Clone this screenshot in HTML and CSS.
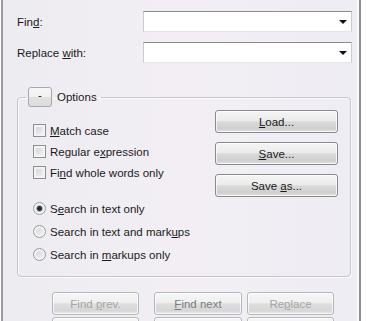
FILE: index.html
```html
<!DOCTYPE html>
<html lang="en">
<head>
  <meta charset="UTF-8" />
  <meta name="viewport" content="width=device-width, initial-scale=1.0" />
  <title>Find and Replace</title>
  <link rel="stylesheet" href="styles.css">
</head>
<body>
  <div class="dialog">
    <!-- search fields -->
    <div class="field">
      <label>Fin<u>d</u>:</label>
      <div class="combo"><input type="text"><span class="arrow"></span></div>
    </div>
    <div class="field">
      <label>Replace <u>w</u>ith:</label>
      <div class="combo"><input type="text"><span class="arrow"></span></div>
    </div>

    <!-- options group -->
    <fieldset class="options">
      <legend><button class="toggle">-</button><span>Options</span></legend>
      <div class="opts-top">
        <div class="checks">
          <label class="opt"><input type="checkbox"><span><u>M</u>atch case</span></label>
          <label class="opt"><input type="checkbox"><span>Regular e<u>x</u>pression</span></label>
          <label class="opt"><input type="checkbox"><span>Fi<u>n</u>d whole words only</span></label>
        </div>
        <div class="side-buttons">
          <button class="btn"><u>L</u>oad...</button>
          <button class="btn"><u>S</u>ave...</button>
          <button class="btn">Save <u>a</u>s...</button>
        </div>
      </div>
      <div class="radios">
        <label class="opt"><input type="radio" name="scope" checked><span>S<u>e</u>arch in text only</span></label>
        <label class="opt"><input type="radio" name="scope"><span>Search in text and mark<u>u</u>ps</span></label>
        <label class="opt"><input type="radio" name="scope"><span>Search in <u>m</u>arkups only</span></label>
      </div>
    </fieldset>

    <!-- actions (second row is cut off by the window) -->
    <div class="actions">
      <button class="btn" disabled>Find <u>p</u>rev.</button>
      <button class="btn default" disabled><u>F</u>ind next</button>
      <button class="btn" disabled>Re<u>p</u>lace</button>
      <button class="btn" disabled></button>
      <button class="btn default" disabled></button>
      <button class="btn" disabled></button>
    </div>
  </div>
</body>
</html>
```

FILE: styles.css
```css
body {
  margin: 0;
  padding: 0;
  background: #fff;
  font-family: "Liberation Sans", Arial, sans-serif;
  font-size: 11.5px;
  color: #1a1a1a;
  overflow: hidden;
}

u {
  text-decoration-thickness: 1px;
  text-underline-offset: 1px;
}

.dialog {
  box-sizing: border-box;
  width: 360px;
  height: 321px;
  margin-left: 1px;
  padding: 11px 7px 0 14px;
  background: linear-gradient(90deg, #edecf1 0%, #f2eef4 50%, #eeedf3 100%);
  border-left: 2px solid #9b9b9b;
  border-right: 2px solid #8f8f8f;
  box-shadow: inset -2px 0 0 #fbfbfd;
  display: flex;
  flex-direction: column;
}

.field {
  display: grid;
  grid-template-columns: 126px 1fr;
  align-items: center;
  height: 21px;
}

.field + .field {
  margin-top: 10px;
}

.combo {
  display: flex;
  align-items: center;
  height: 21px;
  box-sizing: border-box;
  background: #fff;
  border: 1px solid #c9cbd0;
  border-top-color: #8a8c90;
  border-bottom-color: #e3e4e8;
}

.combo input {
  flex: 1;
  min-width: 0;
  border: none;
  outline: none;
  background: transparent;
  font: inherit;
  padding: 0 3px;
}

.arrow {
  width: 0;
  height: 0;
  margin-right: 4px;
  border-left: 4px solid transparent;
  border-right: 4px solid transparent;
  border-top: 4px solid #111;
}

.options {
  margin: 24px 1px 0 0;
  padding: 3px 12px 10px 8px;
  border: 1px solid #c6c6cc;
  border-radius: 4px;
  box-shadow: inset 1px 1px 0 #fbfbfd, 1px 1px 0 #fbfbfd;
}

.options legend {
  display: flex;
  align-items: center;
  gap: 5px;
  padding: 0 4px 0 2px;
}

.toggle {
  width: 24px;
  height: 20px;
  padding: 0 0 3px;
  border: 1px solid #a9a9ad;
  border-radius: 3px;
  background: linear-gradient(#f7f7f7 0%, #f0f0f0 50%, #e2e2e2 51%, #dcdcdc 100%);
  font: inherit;
  line-height: 1;
  color: #222;
}

.opts-top {
  display: flex;
  justify-content: space-between;
}

.checks {
  padding: 10px 0 0 7px;
}

.radios {
  padding-left: 7px;
}

.opt {
  display: flex;
  align-items: center;
  gap: 4px;
  height: 21px;
}

.radios .opt {
  height: 23px;
}

.opt input {
  appearance: none;
  margin: 0;
  width: 13px;
  height: 13px;
  box-sizing: border-box;
  border: 1px solid #8e8f93;
  background: linear-gradient(135deg, #cfd1d4 0%, #f6f6f7 100%);
  box-shadow: inset 0 0 0 2px #f3f3f4;
}

.opt input[type="radio"] {
  border-radius: 50%;
  border-color: #9a9b9f;
}

.opt input[type="radio"]:checked {
  background: radial-gradient(circle, #222 0, #333 2px, #9aa 3px, #eee 4px);
}

.side-buttons {
  display: flex;
  flex-direction: column;
  gap: 9px;
}

.side-buttons .btn {
  width: 123px;
}

.btn {
  height: 23px;
  box-sizing: border-box;
  padding: 0;
  border: 1px solid #8a8b8f;
  border-radius: 3px;
  background: linear-gradient(#f4f4f4 0%, #ececec 45%, #d9d9d9 52%, #cfcfcf 85%, #e4e4e4 100%);
  box-shadow: inset 0 0 0 1px rgba(255, 255, 255, 0.7);
  font: inherit;
  color: #1a1a1a;
}

.btn:disabled {
  border-color: #b6b8bc;
  background: linear-gradient(#f6f6f6 0%, #f0f0f0 45%, #dedede 52%, #d6d6d6 85%, #ececec 100%);
  color: #a6a6a6;
}

.btn.default:disabled {
  color: #7c7c7c;
}

.actions {
  display: grid;
  grid-template-columns: 87px 98px 87px;
  column-gap: 5px;
  row-gap: 2px;
  margin: 15px 0 0 35px;
}

.actions .btn {
  width: 100%;
}

.actions .default {
  margin-left: 10px;
  width: 88px;
}
```
